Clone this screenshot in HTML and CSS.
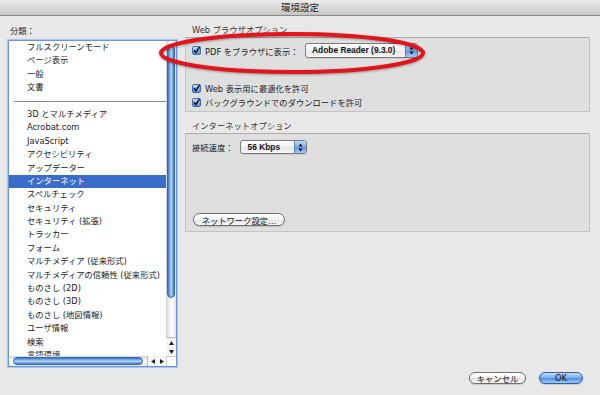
FILE: index.html
```html
<!DOCTYPE html>
<html lang="ja">
<head>
<meta charset="utf-8">
<title>環境設定</title>
<link rel="stylesheet" href="styles.css">
</head>
<body>
<div class="window">
  <div class="titlebar">環境設定</div>
  <div class="content">
    <div class="left">
      <div class="cat-label">分類：</div>
      <div class="listbox">
        <ul class="list">
          <li>フルスクリーンモード</li>
          <li>ページ表示</li>
          <li>一般</li>
          <li>文書</li>
          <li class="sep"></li>
          <li>3D とマルチメディア</li>
          <li>Acrobat.com</li>
          <li>JavaScript</li>
          <li>アクセシビリティ</li>
          <li>アップデーター</li>
          <li class="sel">インターネット</li>
          <li>スペルチェック</li>
          <li>セキュリティ</li>
          <li>セキュリティ (拡張)</li>
          <li>トラッカー</li>
          <li>フォーム</li>
          <li>マルチメディア (従来形式)</li>
          <li>マルチメディアの信頼性 (従来形式)</li>
          <li>ものさし (2D)</li>
          <li>ものさし (3D)</li>
          <li>ものさし (地図情報)</li>
          <li>ユーザ情報</li>
          <li>検索</li>
          <li>言語環境</li>
        </ul>
        <div class="vscroll">
          <div class="vthumb"></div>
          <div class="vtrack"></div>
          <div class="varrows">
            <span class="arr"><svg width="5" height="4" viewBox="0 0 5 4"><path d="M2.5 0 L5 4 L0 4 Z" fill="#222"/></svg></span>
            <span class="arr"><svg width="5" height="4" viewBox="0 0 5 4"><path d="M0 0 L5 0 L2.5 4 Z" fill="#222"/></svg></span>
          </div>
        </div>
        <div class="hscroll">
          <div class="hthumb"></div>
          <div class="htrack"></div>
          <div class="harrows">
            <span class="arr"><svg width="4" height="5" viewBox="0 0 4 5"><path d="M0 2.5 L4 0 L4 5 Z" fill="#222"/></svg></span>
            <span class="arr"><svg width="4" height="5" viewBox="0 0 4 5"><path d="M0 0 L4 2.5 L0 5 Z" fill="#222"/></svg></span>
          </div>
        </div>
        <div class="corner"></div>
      </div>
    </div>

    <div class="right">
      <div class="group-label">Web ブラウザオプション</div>
      <div class="group web">
        <div class="row first">
          <svg class="check" viewBox="0 0 9 9"><defs><linearGradient id="cg1" x1="0" y1="0" x2="0" y2="1"><stop offset="0" stop-color="#d6e6fa"/><stop offset="0.5" stop-color="#86b2ec"/><stop offset="1" stop-color="#4f86d6"/></linearGradient></defs><rect x="0.5" y="0.5" width="8" height="8" rx="1.2" fill="url(#cg1)" stroke="#3f68a6"/><path d="M2 4.3 L3.8 6.6 L7.6 1" fill="none" stroke="#111" stroke-width="1.5"/></svg>
          <span class="pdf-label">PDF をブラウザに表示：</span>
          <div class="popup reader">
            <span class="val">Adobe Reader (9.3.0)</span>
            <span class="caps"><svg width="5" height="9" viewBox="0 0 5 9"><path d="M2.5 0.5 L4.5 3.5 L0.5 3.5 Z M0.5 5.5 L4.5 5.5 L2.5 8.5 Z" fill="#111"/></svg></span>
          </div>
        </div>
        <div class="row opt a">
          <svg class="check" viewBox="0 0 9 9"><rect x="0.5" y="0.5" width="8" height="8" rx="1.2" fill="url(#cg1)" stroke="#3f68a6"/><path d="M2 4.3 L3.8 6.6 L7.6 1" fill="none" stroke="#111" stroke-width="1.5"/></svg>
          <span>Web 表示用に最適化を許可</span>
        </div>
        <div class="row opt">
          <svg class="check" viewBox="0 0 9 9"><rect x="0.5" y="0.5" width="8" height="8" rx="1.2" fill="url(#cg1)" stroke="#3f68a6"/><path d="M2 4.3 L3.8 6.6 L7.6 1" fill="none" stroke="#111" stroke-width="1.5"/></svg>
          <span>バックグラウンドでのダウンロードを許可</span>
        </div>
      </div>

      <div class="group-label second">インターネットオプション</div>
      <div class="group net">
        <div class="row speed-row">
          <span class="speed-label">接続速度：</span>
          <div class="popup speed">
            <span class="val">56 Kbps</span>
            <span class="caps"><svg width="5" height="9" viewBox="0 0 5 9"><path d="M2.5 0.5 L4.5 3.5 L0.5 3.5 Z M0.5 5.5 L4.5 5.5 L2.5 8.5 Z" fill="#111"/></svg></span>
          </div>
        </div>
        <div class="btn net-btn">ネットワーク設定…</div>
      </div>

      <div class="actions">
        <div class="btn cancel">キャンセル</div>
        <div class="btn ok">OK</div>
      </div>
    </div>
  </div>

  <svg class="highlight" width="272" height="48" viewBox="0 0 272 48">
    <ellipse cx="135" cy="24" rx="131" ry="19" fill="none" stroke="#e3141c" stroke-width="4"/>
  </svg>
</div>
</body>
</html>
```

FILE: styles.css
```css
* { box-sizing: border-box; }

html, body {
  margin: 0;
  padding: 0;
}

body {
  width: 600px;
  height: 395px;
  overflow: hidden;
  background: #e8e8e8;
  font-family: "DejaVu Sans", "Noto Sans CJK JP", sans-serif;
  font-size: 8.3px;
  color: #1c1c1c;
}

.window {
  position: relative;
  width: 600px;
  height: 395px;
  display: flex;
  flex-direction: column;
}

.titlebar {
  flex: none;
  height: 16px;
  line-height: 15px;
  text-align: center;
  font-family: "Noto Sans CJK JP", sans-serif;
  font-size: 9.5px;
  color: #222;
  background: linear-gradient(#ececec, #d8d8d8 55%, #c4c4c4);
  border-bottom: 1px solid #8a8a8a;
}

.content {
  flex: 1;
  display: flex;
  padding: 8px 10px 11px 8px;
}

/* left column */
.left {
  flex: none;
  width: 169px;
  display: flex;
  flex-direction: column;
}

.cat-label {
  height: 14px;
  line-height: 14px;
  padding-left: 2px;
  margin-bottom: 2px;
}

.listbox {
  height: 327px;
  display: grid;
  grid-template-columns: 1fr 10px;
  grid-template-rows: 1fr 10px;
  background: #fff;
  border: 1px solid #6d95d0;
  box-shadow: 0 0 0 1px #aac6ec, 0 0 2px 1px #c9dbf3;
}

.list {
  margin: 0;
  padding: 0;
  list-style: none;
  overflow: hidden;
}

.list li {
  height: 13.4px;
  line-height: 13.4px;
  padding-left: 18px;
  white-space: nowrap;
  color: #1a1a1a;
}

.list li.sel {
  background: #3a6ccb;
  color: #fff;
}

.list li.sep {
  height: 1px;
  padding: 0;
  margin: 6.5px 0 5.9px 5px;
  background: #8c8c8c;
}

.vscroll {
  display: flex;
  flex-direction: column;
  padding-top: 4px;
  background: linear-gradient(to right, #d4d4d4, #f2f2f2 35%, #fff 60%, #e4e4e4);
}

.vthumb {
  flex: none;
  height: 253px;
  margin: 0 1px;
  border-radius: 4px;
  border: 1px solid #3466b3;
  background: linear-gradient(to right, #3d72c3, #86b6ee 35%, #b6d6f8 55%, #6ea3e6 80%, #3b6fc0);
}

.vtrack { flex: 1; }

.varrows {
  flex: none;
  height: 19px;
  display: flex;
  flex-direction: column;
  border-top: 1px solid #b8b8b8;
  background: #f6f6f6;
}

.varrows .arr,
.harrows .arr {
  flex: 1;
  display: flex;
  align-items: center;
  justify-content: center;
}

.hscroll {
  display: flex;
  padding-left: 4px;
  background: linear-gradient(#d4d4d4, #f2f2f2 35%, #fff 60%, #e4e4e4);
}

.hthumb {
  flex: none;
  width: 130px;
  margin: 1px 0;
  border-radius: 4px;
  border: 1px solid #3466b3;
  background: linear-gradient(#3d72c3, #86b6ee 35%, #b6d6f8 55%, #6ea3e6 80%, #3b6fc0);
}

.htrack { flex: 1; }

.harrows {
  flex: none;
  width: 19px;
  display: flex;
  border-left: 1px solid #b8b8b8;
  background: #f6f6f6;
}

.corner {
  background: #fff;
  border-left: 1px solid #d0d0d0;
  border-top: 1px solid #d0d0d0;
}

/* right column */
.right {
  flex: 1;
  margin-left: 8px;
  display: flex;
  flex-direction: column;
}

.group-label {
  height: 13px;
  line-height: 13px;
  padding-left: 7px;
  color: #333;
}

.group-label.second {
  margin-top: 7px;
  height: 14px;
  line-height: 14px;
}

.group {
  background: #dfdfdf;
  border: 1px solid #c4c4c4;
  border-top-color: #ababab;
}

.group.web {
  height: 75px;
  padding: 5px 0 0 6px;
}

.group.net {
  height: 99px;
  padding: 6px 6px 5px 6px;
  display: flex;
  flex-direction: column;
}

.row {
  display: flex;
  align-items: center;
  white-space: nowrap;
}

.row.first { height: 15px; }
.row.opt { height: 14px; }
.row.opt.a { margin-top: 23px; }

.check {
  flex: none;
  width: 9px;
  height: 9px;
  margin-right: 4px;
}

.pdf-label { width: 100px; }

.popup {
  display: flex;
  height: 15px;
  border: 1px solid #7b7b7b;
  border-radius: 3px;
  overflow: hidden;
  font-family: "Liberation Sans", "Noto Sans CJK JP", sans-serif;
  font-size: 8.4px;
  font-weight: bold;
  color: #111;
  background: linear-gradient(#fff, #f3f3f3 50%, #e6e6e6 52%, #f7f7f7);
  box-shadow: 0 1px 0 rgba(0,0,0,0.08);
}

.popup .val {
  flex: 1;
  padding-left: 6px;
  line-height: 13px;
}

.popup .caps {
  flex: none;
  width: 12px;
  display: flex;
  align-items: center;
  justify-content: center;
  border-left: 1px solid #5b82bd;
  background: linear-gradient(#c3ddf9, #75a9ea 50%, #5a94e4 52%, #a3cbf6);
}

.popup.reader { width: 113px; }

.popup.speed {
  width: 67px;
  height: 14px;
  margin-left: 6px;
}

.popup.speed .val { line-height: 12px; padding-left: 7px; }

.btn {
  display: flex;
  align-items: center;
  justify-content: center;
  border: 1px solid #6e6e6e;
  border-radius: 7px;
  color: #111;
  background: linear-gradient(#fff, #f4f4f4 50%, #e2e2e2 52%, #f8f8f8);
  box-shadow: 0 1px 1px rgba(0,0,0,0.15);
  white-space: nowrap;
}

.net-btn {
  margin-top: auto;
  margin-left: 1px;
  width: 92px;
  height: 13px;
}

.actions {
  margin-top: auto;
  display: flex;
  justify-content: flex-end;
  gap: 13px;
  padding-right: 7px;
}

.btn.cancel {
  width: 57px;
  height: 12px;
}

.btn.ok {
  width: 44px;
  height: 12px;
  border-color: #2d5da7;
  background: linear-gradient(#c4defa, #7db1ee 45%, #4f8de2 52%, #9fcaf6);
}

.highlight {
  position: absolute;
  left: 157px;
  top: 29px;
  filter: drop-shadow(0 1px 1px rgba(0,0,0,0.35));
}
```
